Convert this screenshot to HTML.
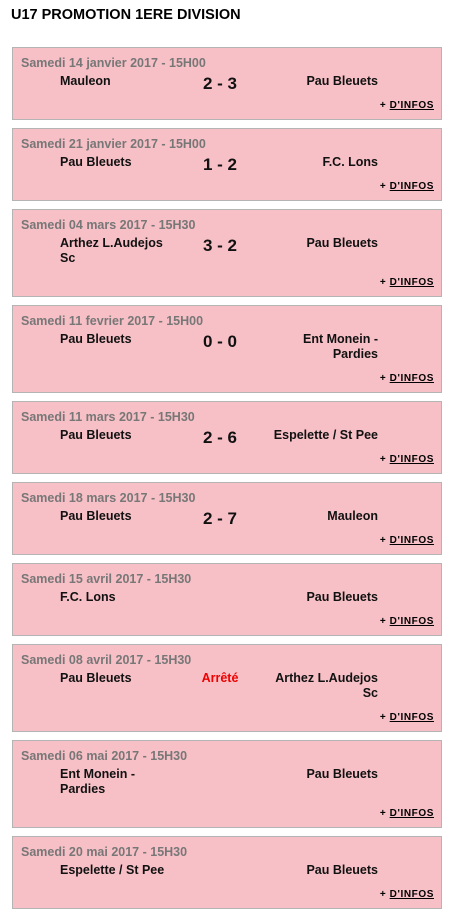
<!DOCTYPE html>
<html><head><meta charset="utf-8"><style>
body{margin:0;background:#fff;font-family:"Liberation Sans",Arial,sans-serif;width:449px;height:917px;overflow:hidden}
h1{font-size:14.5px;font-weight:bold;margin:0;position:absolute;left:11px;top:7px;color:#000}
.list{position:absolute;left:12px;top:47px;width:430px}
.m{background:#f7c0c6;border:1px solid #b4b4b4;box-sizing:border-box;width:430px;height:73px;margin-bottom:8px;padding:7px 7px 0 8px;position:relative}
.m.t{height:88px}
.d{font-size:12.5px;font-weight:bold;color:#777;line-height:16px;height:16px}
.r{display:flex;font-size:12.5px;font-weight:bold;line-height:15px;color:#111;margin-top:3px}
.h{width:110px;margin-left:39px}
.s{width:100px;text-align:center;font-size:17px;line-height:15px;position:relative;top:2px}
.s.red{color:#e00;font-size:12.5px;top:0}
.a{width:108px;text-align:right}
.i{position:absolute;right:7px;bottom:6px;font-size:10px;font-weight:bold;line-height:14px;letter-spacing:.6px}
.i u{text-decoration:underline}
</style></head><body>
<h1>U17 PROMOTION 1ERE DIVISION</h1>
<div class="list">
<div class="m"><div class="d">Samedi 14 janvier 2017 - 15H00</div><div class="r"><div class="h">Mauleon</div><div class="s">2 - 3</div><div class="a">Pau Bleuets</div></div><div class="i">+ <u>D'INFOS</u></div></div>
<div class="m"><div class="d">Samedi 21 janvier 2017 - 15H00</div><div class="r"><div class="h">Pau Bleuets</div><div class="s">1 - 2</div><div class="a">F.C. Lons</div></div><div class="i">+ <u>D'INFOS</u></div></div>
<div class="m t"><div class="d">Samedi 04 mars 2017 - 15H30</div><div class="r"><div class="h">Arthez L.Audejos Sc</div><div class="s">3 - 2</div><div class="a">Pau Bleuets</div></div><div class="i">+ <u>D'INFOS</u></div></div>
<div class="m t"><div class="d">Samedi 11 fevrier 2017 - 15H00</div><div class="r"><div class="h">Pau Bleuets</div><div class="s">0 - 0</div><div class="a">Ent Monein - Pardies</div></div><div class="i">+ <u>D'INFOS</u></div></div>
<div class="m"><div class="d">Samedi 11 mars 2017 - 15H30</div><div class="r"><div class="h">Pau Bleuets</div><div class="s">2 - 6</div><div class="a">Espelette / St Pee</div></div><div class="i">+ <u>D'INFOS</u></div></div>
<div class="m"><div class="d">Samedi 18 mars 2017 - 15H30</div><div class="r"><div class="h">Pau Bleuets</div><div class="s">2 - 7</div><div class="a">Mauleon</div></div><div class="i">+ <u>D'INFOS</u></div></div>
<div class="m"><div class="d">Samedi 15 avril 2017 - 15H30</div><div class="r"><div class="h">F.C. Lons</div><div class="s"></div><div class="a">Pau Bleuets</div></div><div class="i">+ <u>D'INFOS</u></div></div>
<div class="m t"><div class="d">Samedi 08 avril 2017 - 15H30</div><div class="r"><div class="h">Pau Bleuets</div><div class="s red">Arrêté</div><div class="a">Arthez L.Audejos Sc</div></div><div class="i">+ <u>D'INFOS</u></div></div>
<div class="m t"><div class="d">Samedi 06 mai 2017 - 15H30</div><div class="r"><div class="h">Ent Monein - Pardies</div><div class="s"></div><div class="a">Pau Bleuets</div></div><div class="i">+ <u>D'INFOS</u></div></div>
<div class="m"><div class="d">Samedi 20 mai 2017 - 15H30</div><div class="r"><div class="h">Espelette / St Pee</div><div class="s"></div><div class="a">Pau Bleuets</div></div><div class="i">+ <u>D'INFOS</u></div></div>
</div>
</body></html>
